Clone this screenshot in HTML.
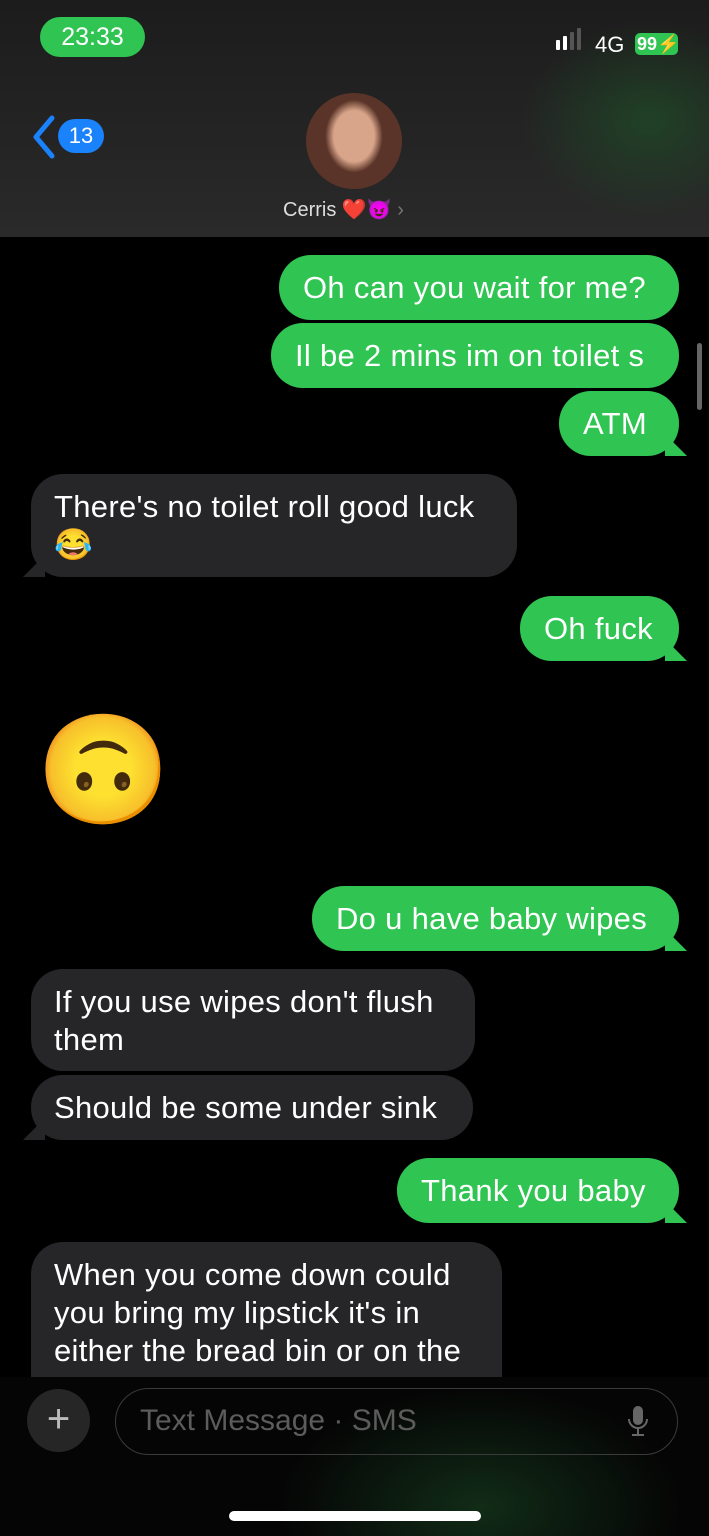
<!DOCTYPE html>
<html><head><meta charset="utf-8"><style>
*{margin:0;padding:0;box-sizing:border-box}
body{width:709px;height:1536px;background:#000;position:relative;overflow:hidden;font-family:"Liberation Sans","Noto Sans CJK JP",sans-serif;color:#fff}
.hdr{position:absolute;left:0;top:0;width:709px;height:237px;background:linear-gradient(180deg,#1c1c1c,#2a2a2a);overflow:hidden}
.glow{position:absolute;left:520px;top:20px;width:260px;height:200px;background:radial-gradient(ellipse at center,rgba(30,90,40,.55),rgba(30,90,40,0) 70%)}
.b{position:absolute;font-size:31px;letter-spacing:0.3px;line-height:38px;padding:14px 23px;border-radius:32px;white-space:nowrap;height:65px;overflow:hidden}
.s{background:#30c452;color:#fff;right:30px;padding-left:24px;overflow:visible}
.r{background:#262628;color:#fff;left:31px;overflow:visible}
.tr::after{content:"";position:absolute;right:-8px;bottom:0;width:22px;height:22px;background:#30c452;clip-path:polygon(0 0,100% 100%,0 100%)}
.tl::after{content:"";position:absolute;left:-8px;bottom:0;width:22px;height:22px;background:#262628;clip-path:polygon(100% 0,100% 100%,0 100%)}
</style></head><body>
<div class="hdr"><div class="glow"></div>
<div style="position:absolute;left:40px;top:17px;width:105px;height:40px;border-radius:20px;background:#30c452;font-size:25px;line-height:40px;text-align:center">23:33</div>
<div style="position:absolute;left:556px;top:40px;width:4px;height:10px;background:#fff;border-radius:1px"></div>
<div style="position:absolute;left:563px;top:36px;width:4px;height:14px;background:#fff;border-radius:1px"></div>
<div style="position:absolute;left:570px;top:32px;width:4px;height:18px;background:#555;border-radius:1px"></div>
<div style="position:absolute;left:577px;top:28px;width:4px;height:22px;background:#555;border-radius:1px"></div>
<div style="position:absolute;left:595px;top:32px;font-size:22px">4G</div>
<div style="position:absolute;left:635px;top:33px;width:43px;height:22px;background:#30c452;border-radius:5px;font-size:18px;font-weight:bold;line-height:22px;padding-left:2px">99⚡</div>
<svg style="position:absolute;left:30px;top:115px" width="28" height="44"><path d="M22 3 L6 22 L22 41" stroke="#1a82fb" stroke-width="5" fill="none" stroke-linecap="round" stroke-linejoin="round"/></svg>
<div style="position:absolute;left:58px;top:119px;width:46px;height:34px;border-radius:17px;background:#1a82fb;font-size:22px;line-height:34px;text-align:center">13</div>
<div style="position:absolute;left:306px;top:93px;width:96px;height:96px;border-radius:50%;background:radial-gradient(ellipse 30% 38% at 50% 45%,#d9a58a 0 70%,#5a3428 100%),#3a2018"></div>
<div style="position:absolute;left:283px;top:197px;font-size:20px;color:#ddd">Cerris ❤️😈 <span style="color:#777">›</span></div>
</div>
<div style="position:absolute;left:697px;top:343px;width:5px;height:67px;border-radius:3px;background:#666"></div>

<div class="b s" style="top:255px;width:400px">Oh can you wait for me?</div>
<div class="b s" style="top:323px;width:408px">Il be 2 mins im on toilet s</div>
<div class="b s tr" style="top:391px;width:120px">ATM</div>
<div class="b r tl" style="top:474px;width:486px;height:103px">There's no toilet roll good luck<br>😂</div>
<div class="b s tr" style="top:596px;width:159px">Oh fuck</div>
<div style="position:absolute;left:36px;top:700px;font-size:108px;line-height:140px">🙃</div>
<div class="b s tr" style="top:886px;width:367px">Do u have baby wipes</div>
<div class="b r" style="top:969px;width:444px;height:102px">If you use wipes don't flush<br>them</div>
<div class="b r tl" style="top:1075px;width:442px">Should be some under sink</div>
<div class="b s tr" style="top:1158px;width:282px">Thank you baby</div>
<div class="b r" style="top:1242px;width:471px;height:200px">When you come down could<br>you bring my lipstick it's in<br>either the bread bin or on the<br>side of somewhere</div>

<div style="position:absolute;left:0;top:1377px;width:709px;height:159px;background:radial-gradient(ellipse 200px 120px at 480px 130px,rgba(25,70,35,.6),rgba(0,0,0,0)),#050505"></div>
<div style="position:absolute;left:27px;top:1389px;width:63px;height:63px;border-radius:50%;background:#262626;font-size:40px;line-height:60px;text-align:center;color:#bbb">+</div>
<div style="position:absolute;left:115px;top:1388px;width:563px;height:67px;border-radius:34px;border:1.5px solid #3a3a3a"></div>
<div style="position:absolute;left:140px;top:1404px;font-size:30px;color:#5c5c5c">Text Message · SMS</div>
<svg style="position:absolute;left:626px;top:1405px" width="24" height="34"><rect x="7" y="1" width="10" height="19" rx="5" fill="#666"/><path d="M3 14 a9 9 0 0 0 18 0 M12 23 V29 M6 30 H18" stroke="#666" stroke-width="2" fill="none"/></svg>
<div style="position:absolute;left:229px;top:1511px;width:252px;height:10px;border-radius:5px;background:#fff"></div>
</body></html>
